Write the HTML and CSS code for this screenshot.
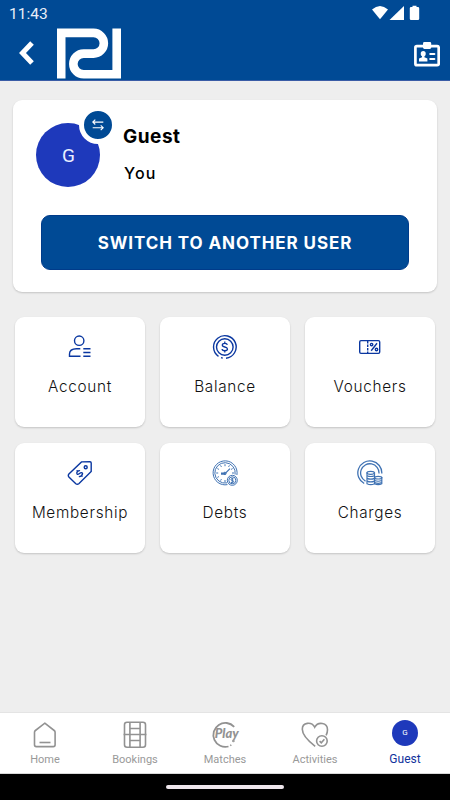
FILE: index.html
```
<!DOCTYPE html>
<html lang="en">
<head>
	<meta charset="utf-8">
	<meta name="viewport" content="width=device-width, initial-scale=1">
	<title>Guest</title>
	<link rel="stylesheet" href="styles.css">
</head>
<body>
	<div class="app">
		<header class="header">
			<div class="status">
				<span class="time">11:43</span>
				<svg class="signals" width="50" height="17" viewBox="0 0 50 17">
					<path d="M1 4.500Q9 -2.500 17 4.500L9 14.300Z"/>
					<path d="M18.500 15H33V1Z"/>
					<path d="M41.500 2V.8h4V2h1.400q1.300 0 1.300 1.300v10.400q0 1.300-1.300 1.300h-6.800q-1.300 0-1.300-1.300V3.300q0-1.300 1.300-1.300z"/>
				</svg>
			</div>
			<div class="toolbar">
				<svg class="back" width="16" height="24" viewBox="0 0 16 24"><path d="M13 2L3.500 12L13 22"/></svg>
				<svg class="logo" width="65" height="51" viewBox="57 28 65 51"><path d="M61.200 78.600V32.900H93.500a10.350 10.350 0 0 1 0 20.700H83.700a10.350 10.350 0 0 0 0 20.700H116.700V28.600"/></svg>
				<svg class="badge-icon" width="26" height="26" viewBox="0 0 26 26">
					<rect x="1.400" y="4.200" width="23.300" height="19" rx="1.500" fill="none" stroke="#fff" stroke-width="2.700"/>
					<rect x="9" y="0" width="8.200" height="7" rx="1.400"/>
					<ellipse cx="9.200" cy="11.700" rx="2.500" ry="2.700"/>
					<path d="M8 13h2.400v2.200l3 1.300v3H5v-3l3-1.300z"/>
					<path d="M16.300 12h4M16.300 17h4" stroke="#fff" stroke-width="2.200" stroke-linecap="round"/>
				</svg>
			</div>
		</header>

		<main class="main">
			<section class="profile">
				<div class="user">
					<div class="avatar">G
						<span class="swap">
							<svg width="12" height="12" viewBox="0 0 12 12"><path d="M3.300 .7L.8 3.100l2.500 2.400M1 3.100h10.300M.7 8.700H11M8.700 6.300l2.500 2.400-2.500 2.400"/></svg>
						</span>
					</div>
					<div class="names">
						<h1 class="name">Guest</h1>
						<p class="relation">You</p>
					</div>
				</div>
				<button class="switch">SWITCH TO ANOTHER USER</button>
			</section>

			<section class="tiles">
				<div class="tile">
					<svg class="icon" width="26" height="26" viewBox="0 0 26 26">
						<circle cx="12.200" cy="6.700" r="4.700"/>
						<path d="M13.300 14.700H9.500Q2.500 14.700 2.500 20v2.300h11M16.300 14.700h7.200M16.300 18.500h7.200M16.300 22.300h7.200"/>
					</svg>
					<span class="label">Account</span>
				</div>
				<div class="tile">
					<svg class="icon" width="26" height="26" viewBox="0 0 26 26">
						<path d="M6.500 22.300A11.300 11.300 0 1 1 14 24.200M5 20.900l-.8-1M9 23.600l1.800.5"/>
						<circle cx="12.800" cy="13" r="8.300"/>
						<path d="M15.300 10.800Q15.100 9.300 12.800 9.300T10.300 11Q10.300 12.600 12.800 13T15.500 15Q15.500 16.700 12.800 16.700T10.100 15M12.800 7.500v1.800M12.800 16.700v1.800" stroke-width="1.300"/>
					</svg>
					<span class="label">Balance</span>
				</div>
				<div class="tile">
					<svg class="icon" width="26" height="26" viewBox="0 0 26 26">
						<rect x="2.700" y="6.600" width="20" height="12.800" rx="1.300"/>
						<path d="M10.700 7v12" stroke-dasharray="2.400 1.100"/>
						<path d="M20 9.300l-5.800 7.400"/>
						<circle cx="14.600" cy="10.600" r="1.200"/><circle cx="19.500" cy="15.500" r="1.200"/>
					</svg>
					<span class="label">Vouchers</span>
				</div>
				<div class="tile">
					<svg class="icon" width="26" height="26" viewBox="0 0 26 26">
						<path d="M14.500 1.900L23 1.700q1.200 0 1.200 1.200v8.600L11.800 23.700q-1.500 1.200-3 0L1.900 17q-1.200-1.500 0-3z"/>
						<circle cx="18.700" cy="7.200" r="1.500"/>
						<g transform="rotate(-45 12.500 13.500)"><path d="M14.700 11.900Q14.500 10.800 12.500 10.800T10.400 12.200Q10.400 13.300 12.500 13.500T14.800 15Q14.800 16.300 12.500 16.300T10.200 15.100M12.500 9.300v1.500M12.500 16.300v1.500"/></g>
					</svg>
					<span class="label">Membership</span>
				</div>
				<div class="tile">
					<svg class="icon fine" width="26" height="26" viewBox="0 0 26 26">
						<path d="M15.500 24.600A12 12 0 1 1 24.900 15M15 22.900A10.200 10.200 0 1 1 23.100 14.500"/>
						<path d="M13 4.200v2M13 20v2M4.200 13h2M20 13h2M8.600 5.400l.8 1.500M17.400 5.400l-.8 1.500M5.400 8.600l1.500.8M20.600 8.600l-1.500.8M5.400 17.400l1.500-.8M8.600 20.600l.8-1.500"/>
						<path d="M9 13.200h4.500L18 8.700M9 14.200h4.500" stroke-width="1.200"/>
						<circle cx="12.900" cy="13.400" r="1.200"/>
						<circle cx="20.300" cy="20.300" r="5" fill="#fff"/><circle cx="20.300" cy="20.300" r="3.500"/>
						<path d="M21.500 18.900q-2.500-.9-2.500.4t1.300 1.100 1.100 1.500-2.400.4M20.300 17.800v5"/>
					</svg>
					<span class="label">Debts</span>
				</div>
				<div class="tile">
					<svg class="icon fine" width="26" height="26" viewBox="0 0 26 26">
						<path d="M7.200 23.500A12 12 0 1 1 24.800 13.500M8.500 21.100A9.200 9.200 0 1 1 22 13.500" stroke-width="1.300"/>
						<g fill="#fff" stroke-width="1.200">
							<path d="M17.500 17.700v6q3.700 1.800 7.300 0v-6z"/><ellipse cx="21.200" cy="17.700" rx="3.600" ry="1.300"/>
							<path d="M17.500 20.500q3.700 1.500 7.300 0M17.500 22.600q3.700 1.500 7.300 0" fill="none"/>
							<path d="M10 12.800v11q3.800 1.800 7.500 0v-11z"/><ellipse cx="13.700" cy="12.800" rx="3.700" ry="1.500"/>
							<path d="M10 15.700q3.800 1.600 7.500 0M10 18.400q3.800 1.600 7.500 0M10 21.100q3.800 1.600 7.500 0" fill="none"/>
						</g>
					</svg>
					<span class="label">Charges</span>
				</div>
			</section>
		</main>

		<nav class="nav">
			<a class="nav-item">
				<svg class="nav-icon" width="30" height="30" viewBox="0 0 30 30">
					<path d="M14.800 3.200L24.200 10.500q.9.700.9 1.800v12.500q0 1.800-1.800 1.800H6.300q-1.800 0-1.800-1.800V12.300q0-1.100.9-1.800z"/>
					<path d="M9.500 22.500h11"/>
				</svg>
				<span>Home</span>
			</a>
			<a class="nav-item">
				<svg class="nav-icon" width="30" height="30" viewBox="0 0 30 30">
					<rect x="4.500" y="2.200" width="21" height="25" rx="2.500"/>
					<path d="M9.900 2.200v25M20.100 2.200v25M3.600 14.500h22.800M9.900 8.500h10.200M9.900 20.500h10.200"/>
				</svg>
				<span>Bookings</span>
			</a>
			<a class="nav-item">
				<svg class="nav-icon" width="30" height="30" viewBox="0 0 30 30">
					<path d="M24.200 6.800A12 12 0 1 0 18.500 26.500" stroke-width="1.800"/>
					<circle cx="23.400" cy="21" r=".5"/>
					<path d="M20.300 25.600l1-.7"/>
					<text class="play" x="4.800" y="18" textLength="24" lengthAdjust="spacingAndGlyphs">Play</text>
				</svg>
				<span>Matches</span>
			</a>
			<a class="nav-item">
				<svg class="nav-icon" width="30" height="30" viewBox="0 0 30 30">
					<path d="M15.200 26.300Q2.300 16.500 2.300 9.300C2.300 2.300 11.500 1.300 14.700 7.200C17.900 1.300 27.500 2.300 27.500 9.700q0 2.700-1.400 5.700"/>
					<circle cx="21.900" cy="21" r="5.300"/>
					<path d="M19.600 21.100l1.700 1.700 3.100-3.500"/>
				</svg>
				<span>Activities</span>
			</a>
			<a class="nav-item active">
				<i class="nav-avatar">G</i>
				<span>Guest</span>
			</a>
		</nav>
		<div class="system-bar"><span class="pill"></span></div>
	</div>
</body>
</html>
```
FILE: styles.css
```
* {
	box-sizing: border-box;
	margin: 0;
	padding: 0;
}

body {
	font-family: Roboto, "Liberation Sans", sans-serif;
	background: #eee;
}

.app {
	display: flex;
	flex-direction: column;
	height: 800px;
	width: 450px;
}

/* header */
.header {
	height: 81px;
	background: #004a95;
	border-bottom: 1px solid #3a5ca6;
	color: #fff;
}

.status {
	display: flex;
	justify-content: space-between;
	height: 28px;
	padding: 5px 29px 0 9px;
}

.time {
	font-size: 15.5px;
	line-height: 18px;
	color: #e8eef8;
}

.signals {
	fill: #fff;
}

.toolbar {
	display: flex;
	align-items: flex-start;
	padding: 0 10px 0 19px;
}

.back {
	margin-top: 13px;
	fill: none;
	stroke: #fff;
	stroke-width: 5;
}

.logo {
	margin-left: 22px;
	fill: none;
	stroke: #fff;
	stroke-width: 8.6;
}

.badge-icon {
	margin: 14px 0 0 auto;
	fill: #fff;
}

/* content */
.main {
	flex: 1;
	padding: 19px 13px 0;
}

.profile {
	height: 192px;
	padding: 23px 28px 0 23px;
	background: #fff;
	border-radius: 9px;
	box-shadow: 0 1px 2px rgba(0, 0, 0, .18);
}

.user {
	display: flex;
	height: 92px;
}

.avatar {
	position: relative;
	width: 64px;
	height: 64px;
	border-radius: 50%;
	background: #1e39bb;
	color: #e9eeff;
	font-size: 19px;
	line-height: 65px;
	text-align: center;
	text-indent: 1px;
}

.swap {
	position: absolute;
	top: -17px;
	left: 43px;
	display: flex;
	align-items: center;
	justify-content: center;
	width: 38px;
	height: 38px;
	border: 5px solid #fff;
	border-radius: 50%;
	background: #004a95;
}

.swap svg {
	fill: none;
	stroke: #fff;
	stroke-width: 1.1;
}

.names {
	padding: 2px 0 0 23px;
	font-family: Inter, "Open Sans", sans-serif;
	color: #000;
}

.name {
	font-size: 19px;
	font-weight: 700;
	line-height: 24px;
	letter-spacing: .5px;
}

.relation {
	margin: 12px 0 0 1px;
	font-size: 16px;
	font-weight: 500;
	line-height: 24px;
	letter-spacing: 1.2px;
}

.switch {
	display: block;
	width: 368px;
	height: 55px;
	margin-left: 5px;
	border: 1px solid #003b8a;
	border-radius: 9px;
	background: #004a95;
	color: #fff;
	font-family: Inter, "Open Sans", sans-serif;
	font-size: 17px;
	font-weight: 700;
	letter-spacing: .92px;
}

.tiles {
	display: grid;
	grid-template-columns: repeat(3, 130px);
	grid-auto-rows: 110px;
	gap: 16px 15px;
	padding: 25px 2px 0;
}

.tile {
	display: flex;
	flex-direction: column;
	align-items: center;
	padding-top: 17px;
	border-radius: 9px;
	background: #fff;
	box-shadow: 0 1px 2px rgba(0, 0, 0, .18);
}

.icon {
	fill: none;
	stroke: #0a37a0;
	stroke-width: 1.4;
}

.icon.fine {
	stroke: #3f72b3;
	stroke-width: 1;
}

.label {
	margin-top: 14px;
	font-family: Inter, "Open Sans", sans-serif;
	font-size: 15.3px;
	font-weight: 300;
	line-height: 25px;
	letter-spacing: .7px;
	color: #111;
}

/* bottom navigation */
.nav {
	display: flex;
	height: 62px;
	border-top: 1px solid #e4e4e4;
	border-bottom: 1px solid #d8d8d8;
	background: #fff;
}

.nav-item {
	flex: 1;
	display: flex;
	flex-direction: column;
	align-items: center;
	padding-top: 7px;
	color: #999;
	font-size: 11px;
	line-height: 16px;
}

.nav-item span {
	margin-top: 2px;
}

.nav-icon {
	fill: none;
	stroke: #929292;
	stroke-width: 1.6;
}

.play {
	fill: #929292;
	stroke: none;
	font-family: Lato, sans-serif;
	font-size: 13px;
	font-style: italic;
	font-weight: 900;
}

.nav-item.active {
	color: #10329c;
	font-size: 12px;
}

.nav-item.active span {
	margin-top: 1px;
}

.nav-avatar {
	width: 26px;
	height: 26px;
	margin-bottom: 4px;
	border-radius: 50%;
	background: #1e39bb;
	color: #fff;
	font-size: 8px;
	font-style: normal;
	line-height: 26px;
	text-align: center;
}

.system-bar {
	display: flex;
	align-items: center;
	justify-content: center;
	height: 26px;
	background: #000;
}

.pill {
	width: 118px;
	height: 4px;
	border-radius: 2px;
	background: #eee6ec;
}
```
